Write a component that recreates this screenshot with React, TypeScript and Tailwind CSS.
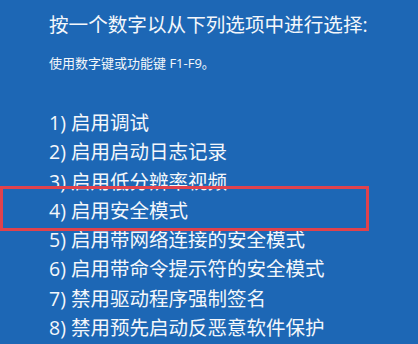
import React from "react";

const items = [
  "1) 启用调试",
  "2) 启用启动日志记录",
  "3) 启用低分辨率视频",
  "4) 启用安全模式",
  "5) 启用带网络连接的安全模式",
  "6) 启用带命令提示符的安全模式",
  "7) 禁用驱动程序强制签名",
  "8) 禁用预先启动反恶意软件保护",
];

export default function App() {
  return (
    <div
      className="relative w-[418px] h-[344px] overflow-hidden bg-[#1d67b5] text-[#f4f7fb]"
      style={{ fontFamily: '"Open Sans", "Noto Sans CJK SC", sans-serif' }}
    >
      <div className="pl-[49px] pt-[10px]">
        <div className="text-[19.6px] leading-[30px]">按一个数字以从下列选项中进行选择:</div>
        <div className="mt-[13px] text-[13px] leading-[20px]">使用数字键或功能键 F1-F9。</div>
        <div className="mt-[35px] flex flex-col">
          {items.map((t) => (
            <div key={t} className="h-[29.3px] text-[19.5px] leading-[29px] whitespace-nowrap">
              {t}
            </div>
          ))}
        </div>
      </div>
      <div className="absolute left-0 top-[186px] w-[369px] h-[45px] border-[3px] border-[#e0424c]" />
    </div>
  );
}
